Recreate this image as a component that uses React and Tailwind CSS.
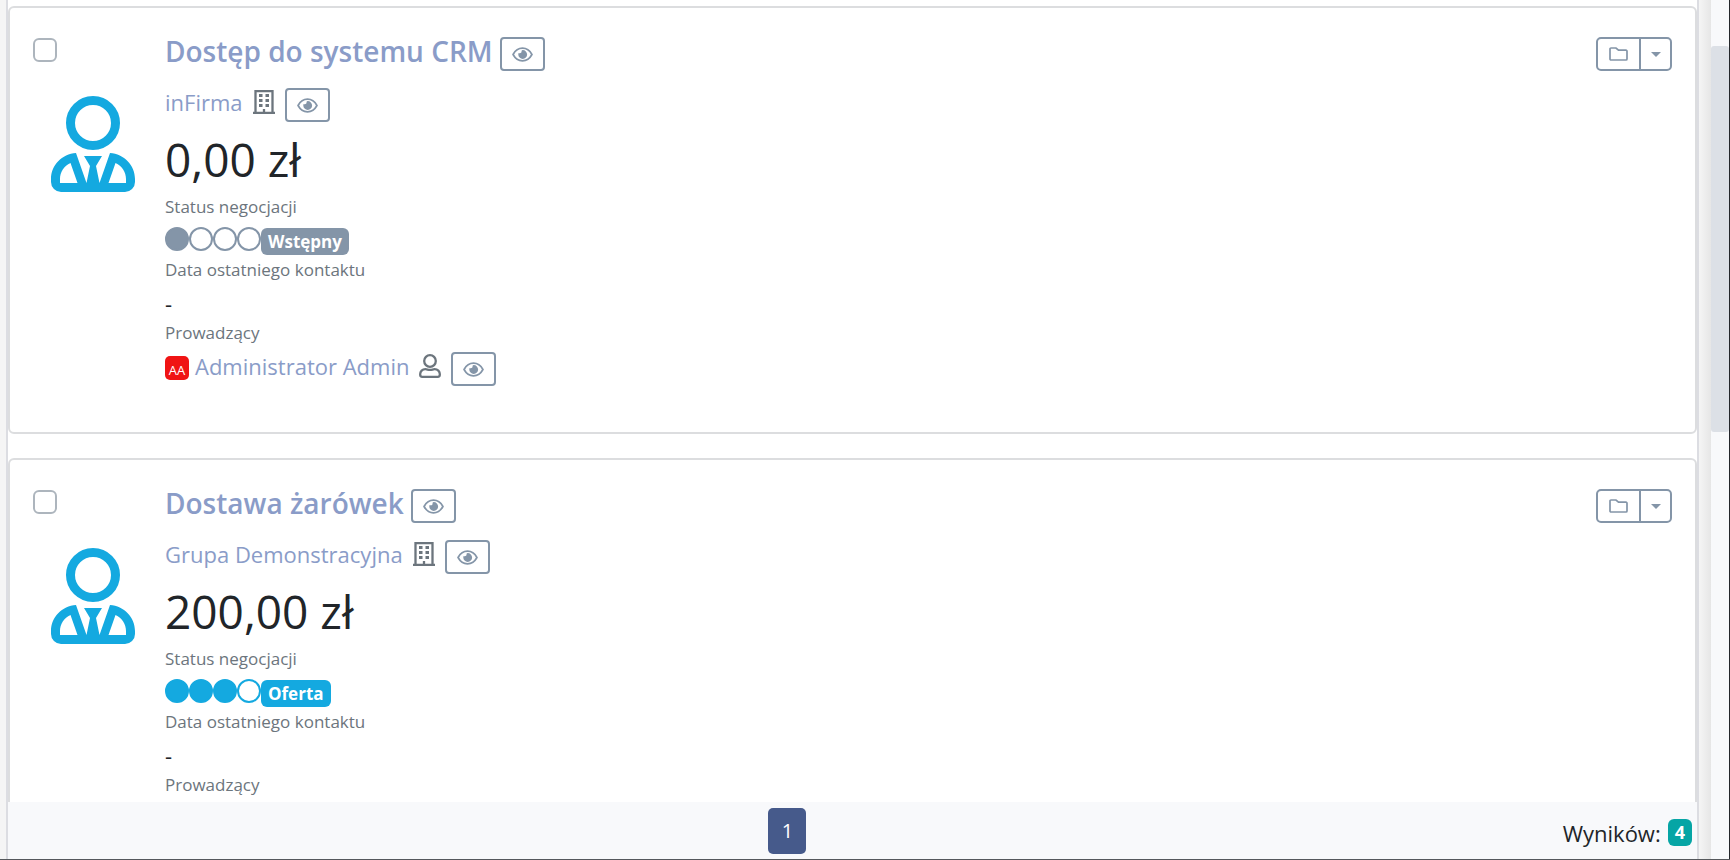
import React from "react";

function EyeButton({ label }) {
  return (
    <button type="button" aria-label={label} className="flex h-[34px] w-[45px] shrink-0 items-center justify-center rounded-[4px] border-2 border-[#8495a8] text-[#8495a8]">
      <svg viewBox="0 0 20 14" className="h-[15px] w-[21px]" fill="none" stroke="currentColor" strokeWidth="1.6" aria-hidden="true">
        <path d="M1 7C3 3.3 6.2 1 10 1s7 2.3 9 6c-2 3.700-5.200 6-9 6S3 10.700 1 7Z" />
        <path d="M10.200 2.800a4.200 4.200 0 1 1-4.200 4.200c0-.6.1-1.100.3-1.500 1.100.800 2.900.200 2.800-1.300 0-.5.1-1.300 1.100-1.400Z" fill="currentColor" stroke="none" />
      </svg>
    </button>
  );
}

function PersonIcon() {
  return (
    <svg viewBox="0 0 84 96" className="h-24 w-[84px] text-[#14a9e0]" aria-hidden="true">
      <circle cx="42" cy="27" r="22.5" fill="none" stroke="currentColor" strokeWidth="9" />
      <path fill="currentColor" fillRule="evenodd" d="M25 57 35.500 87 39 70 33 60H51L45 70 48.500 87 59 57C73 58 84 69 84 83V86A10 10 0 0 1 74 96H10A10 10 0 0 1 0 86V83C0 69 11 58 25 57ZM19.500 67C13 70 9 76 9 83V87H26.500ZM64.500 67 57.500 87H75V83C75 76 71 70 64.500 67Z" />
    </svg>
  );
}

function BuildingIcon() {
  return (
    <svg viewBox="0 0 22 24" className="h-6 w-[22px] shrink-0 text-[#6c757d]" aria-hidden="true">
      <path d="M2.500 23V1h17v22M0 23h22M11 23v-4" fill="none" stroke="currentColor" strokeWidth="2.300" />
      <path d="M6 4h3.500v3H6zM12.500 4H16v3h-3.500zM6 9h3.500v3H6zM12.500 9H16v3h-3.500zM6 14h3.500v3H6zM12.500 14H16v3h-3.500z" fill="currentColor" />
    </svg>
  );
}

function UserIcon() {
  return (
    <svg viewBox="0 0 22 24" className="h-6 w-[22px] shrink-0 text-[#6c757d]" fill="none" stroke="currentColor" strokeWidth="2.300" aria-hidden="true">
      <circle cx="11" cy="7" r="5.800" />
      <path d="M6.500 15.200c-3.300 0-5.300 2.300-5.300 4.800v.8a2 2 0 0 0 2 2h15.600a2 2 0 0 0 2-2V20c0-2.500-2-4.800-5.300-4.800-1.500 0-2.500.7-4.500.7s-3-.7-4.500-.7Z" />
    </svg>
  );
}

function Dots({ filled, tone }) {
  return (
    <span className={"flex " + tone}>
      {[0, 1, 2, 3].map((i) => (
        <span key={i} className={"size-6 rounded-full border-2 border-current " + (i < filled ? "bg-current" : "")} />
      ))}
    </span>
  );
}

const label = "text-[17px] leading-6 text-[#6c757d]";
const link = "text-[22px] leading-7 text-[#8a9cc8]";

function DealCard({ id, title, company, price, filled, tone, badge, status, owner, initials }) {
  return (
    <article className="flex shrink-0 rounded-[6px] border-2 border-[#dcdddf] bg-white pb-[46px] pl-[23px] pr-[23px] pt-[29px]">
      <div className="w-[132px] shrink-0">
        <input id={id} type="checkbox" aria-label={title} className="mt-px block size-6 appearance-none rounded-[6px] border-2 border-[#adb5bd] bg-white" />
        <div className="ml-[18px] mt-[34px]"><PersonIcon /></div>
      </div>
      <div className="min-w-0 flex-1">
        <div className="flex items-start gap-[7px]">
          <a href="#" className="text-[28px] font-semibold leading-7 text-[#8a9cc8]">{title}</a>
          <EyeButton label={"Podgląd: " + title} />
        </div>
        <div className="mt-[17px] flex items-start gap-[10px]">
          <span className="flex h-7 items-center gap-[10px]">
            <a href="#" className={link}>{company}</a>
            <BuildingIcon />
          </span>
          <EyeButton label={"Podgląd: " + company} />
        </div>
        <div className="mt-[5px] text-[46px] leading-[64px] text-[#212529]">{price}</div>
        <div className={label + " mt-1"}>Status negocjacji</div>
        <div className="mt-2 flex h-7 items-start">
          <Dots filled={filled} tone={tone} />
          <span className={"mt-px rounded-[6px] px-[7px] text-[17px] font-bold leading-[27px] text-white " + badge}>{status}</span>
        </div>
        <div className={label + " mt-[3px]"}>Data ostatniego kontaktu</div>
        <div className="mt-[3px] text-[22px] leading-9 text-[#212529]">-</div>
        <div className={label}>Prowadzący</div>
        {owner && (
          <div className="mt-[7px] flex items-start gap-[10px]">
            <span className="flex h-7 items-center gap-[10px]">
              <span className="flex items-end gap-[6px]">
                <span className="flex size-6 items-end justify-center rounded-[5px] bg-[#f01414] text-[13px] leading-5 text-white">{initials}</span>
                <a href="#" className={link}>{owner}</a>
              </span>
              <UserIcon />
            </span>
            <EyeButton label={"Podgląd: " + owner} />
          </div>
        )}
      </div>
      <div className="flex h-[34px] shrink-0 rounded-[5px] border-2 border-[#8495a8] text-[#8495a8]">
        <button type="button" aria-label="Folder" className="flex w-[43px] items-center justify-center border-r-2 border-[#8495a8]">
          <svg viewBox="0 0 19 14" className="h-[14px] w-[19px]" fill="none" stroke="currentColor" strokeWidth="1.700" aria-hidden="true"><path d="M1 2a1 1 0 0 1 1-1h5l2.500 2.200H17a1 1 0 0 1 1 1V12a1 1 0 0 1-1 1H2a1 1 0 0 1-1-1Z" /></svg>
        </button>
        <button type="button" aria-label="Więcej" className="flex w-[29px] items-center justify-center">
          <svg viewBox="0 0 10 5" className="h-[5px] w-[10px]" fill="currentColor" aria-hidden="true"><path d="M0 0h10L5 5Z" /></svg>
        </button>
      </div>
    </article>
  );
}

export default function App() {
  return (
    <div className="flex h-screen flex-col overflow-hidden border-b border-[#55585c] font-['Open_Sans','Noto_Sans',sans-serif]">
      <div className="flex min-h-0 flex-1">
        <div className="w-[6px] shrink-0 bg-[#f5f5f5]" />
        <main className="flex min-w-0 flex-1 flex-col border-x-2 border-[#dcdde2]">
          <div className="flex min-h-0 flex-1 flex-col gap-6 overflow-hidden pt-[6px]">
            <DealCard id="deal-crm" title="Dostęp do systemu CRM" company="inFirma" price="0,00 zł" filled={1} tone="text-[#8495a8]" badge="bg-[#8495a8]" status="Wstępny" owner="Administrator Admin" initials="AA" />
            <DealCard id="deal-bulbs" title="Dostawa żarówek" company="Grupa Demonstracyjna" price="200,00 zł" filled={3} tone="text-[#14a9e0]" badge="bg-[#14a9e0]" status="Oferta" />
          </div>
          <footer className="flex h-[57px] shrink-0 items-center bg-[#f8f9fb] pl-1 pr-[5px]">
            <nav aria-label="Strony" className="flex flex-1 justify-center">
              <button type="button" className="h-[46px] w-[38px] rounded-[5px] bg-[#465a8b] text-[20px] text-white">1</button>
            </nav>
            <div className="flex items-center gap-[7px] pt-1 text-[22px] leading-8 text-[#212529]">
              Wyników: <span className="rounded-[6px] bg-[#06a5a5] px-[7px] text-[18px] font-bold leading-[27px] text-white">4</span>
            </div>
          </footer>
        </main>
        <div className="w-3 shrink-0 bg-linear-to-r from-[#f5f5f5] to-[#e6e6e6]" />
        <div className="w-[18px] shrink-0 bg-[#f8f9fb] pt-[46px]">
          <div className="h-[386px] rounded-[3px] bg-[#dce0e6]" />
        </div>
        <div className="w-px shrink-0 bg-[#23262b]" />
      </div>
    </div>
  );
}
